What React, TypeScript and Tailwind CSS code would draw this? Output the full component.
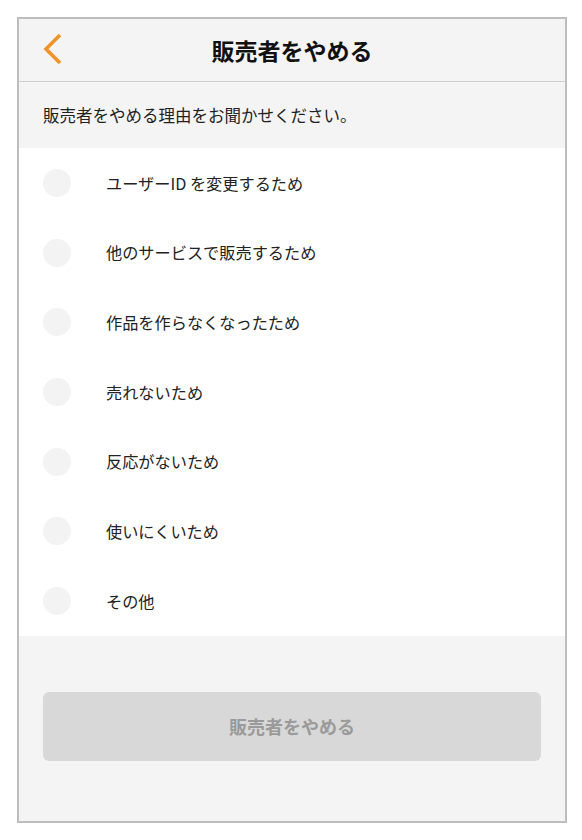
import React from "react";

const reasons = [
  "ユーザーID を変更するため",
  "他のサービスで販売するため",
  "作品を作らなくなったため",
  "売れないため",
  "反応がないため",
  "使いにくいため",
  "その他",
];

export default function App() {
  return (
    <div
      className="w-[582px] h-[840px] bg-white pl-[17px] pt-[17px]"
      style={{ fontFamily: '"Noto Sans CJK JP", "Noto Sans", sans-serif' }}
    >
      <div className="w-[550px] h-[806px] border-2 border-[#bdbdbd] bg-[#f4f4f4] flex flex-col">
        <div className="relative h-[63px] border-b border-[#cfcfcf] flex items-center justify-center">
          <svg
            className="absolute left-[23px] top-[14px]"
            width="20"
            height="32"
            viewBox="0 0 20 32"
            fill="none"
          >
            <path
              d="M18 2 L4 16 L18 30"
              stroke="#f0932b"
              strokeWidth="3.6"
              strokeLinecap="butt"
              strokeLinejoin="miter"
            />
          </svg>
          <h1 className="text-[23px] font-bold text-[#111] leading-none">販売者をやめる</h1>
        </div>
        <div className="h-[66px] flex items-center pl-[24px]">
          <p className="text-[16.5px] text-[#222] leading-none">販売者をやめる理由をお聞かせください。</p>
        </div>
        <div className="bg-white flex flex-col">
          {reasons.map((r) => (
            <div key={r} className="h-[69.7px] flex items-center pl-[24px]">
              <span className="w-[28px] h-[28px] rounded-full bg-[#f3f3f3] shrink-0" />
              <span className="ml-[35px] text-[16.2px] text-[#222] leading-none">{r}</span>
            </div>
          ))}
        </div>
        <div className="flex-1 pt-[56px] px-[24px]">
          <button className="w-full h-[69px] rounded-[6px] bg-[#d8d8d8] text-[#9a9a9a] text-[18px] font-bold">
            販売者をやめる
          </button>
        </div>
      </div>
    </div>
  );
}
